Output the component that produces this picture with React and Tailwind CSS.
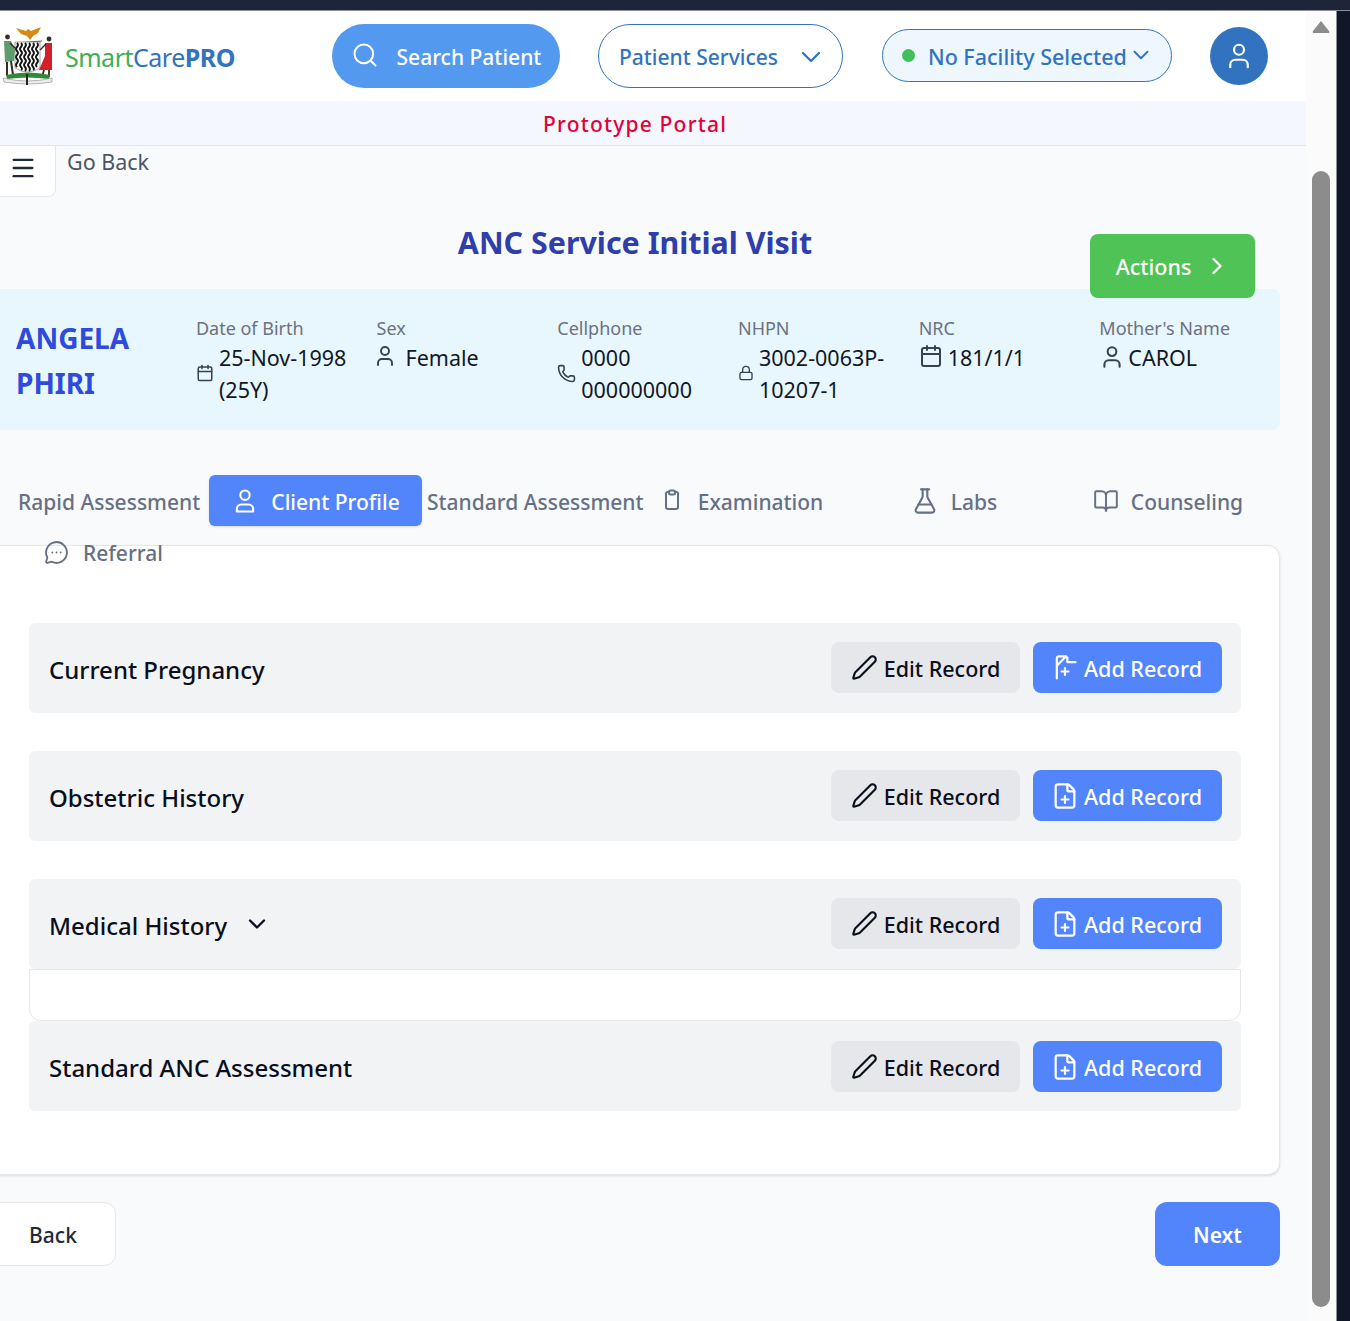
import {
  Search,
  ChevronDown,
  ChevronRight,
  User,
  Menu,
  Calendar,
  Phone,
  Lock,
  FlaskConical,
  BookOpen,
  MessageCircleMore,
  Pen,
  FilePlus,
} from "lucide-react";

/* ───── Coat of arms, drawn small ───── */
const CoatOfArms = () => (
  <svg width="52" height="60" viewBox="0 0 52 60" className="shrink-0">
    {/* eagle */}
    <path d="M14 2 L24 5 L26 3 L29 5 L39 1 L36 7 L31 10 L28 14 L25 10 L19 8 Z" fill="#d98a14" />
    <path d="M14 17 L40 15" stroke="#7a5a2a" strokeWidth="1.2" />
    {/* shield with the wavy stripes */}
    <path d="M13 16 H38 V42 Q25 50 13 42 Z" fill="#fff" stroke="#444" strokeWidth="0.5" />
    <g fill="none" stroke="#111" strokeWidth="1.8">
      <path d="M15 17 q2 2 0 4 q-2 2 0 4 q2 2 0 4 q-2 2 0 4 q2 2 0 4 q-2 2 0 4" />
      <path d="M19 17 q2 2 0 4 q-2 2 0 4 q2 2 0 4 q-2 2 0 4 q2 2 0 4 q-2 2 0 4 q2 2 0 3" />
      <path d="M23 17 q2 2 0 4 q-2 2 0 4 q2 2 0 4 q-2 2 0 4 q2 2 0 4 q-2 2 0 4 q2 2 0 4" />
      <path d="M27 17 q2 2 0 4 q-2 2 0 4 q2 2 0 4 q-2 2 0 4 q2 2 0 4 q-2 2 0 4 q2 2 0 4" />
      <path d="M31 17 q2 2 0 4 q-2 2 0 4 q2 2 0 4 q-2 2 0 4 q2 2 0 4 q-2 2 0 4 q2 2 0 3" />
      <path d="M35 17 q2 2 0 4 q-2 2 0 4 q2 2 0 4 q-2 2 0 4 q2 2 0 4 q-2 2 0 4" />
    </g>
    {/* left figure */}
    <circle cx="5.500" cy="11" r="2.400" fill="#3a2a20" />
    <path d="M2 15 L9 15 L13 24 L12 35 L3 36 Z" fill="#5f9c6c" />
    <path d="M5 36 L5 49 M9 35 L11 49" stroke="#3a2a20" strokeWidth="2" />
    <path d="M8 17 L14 23" stroke="#3a2a20" strokeWidth="1.5" />
    {/* right figure */}
    <circle cx="47" cy="13" r="2.400" fill="#3a2a20" />
    <path d="M43 17 L50 17 L50 44 L37 44 L43 30 Z" fill="#d5202a" />
    <path d="M42 44 L40 51 M47 44 L47 51" stroke="#3a2a20" strokeWidth="1.8" />
    <path d="M44 18 L38 24" stroke="#3a2a20" strokeWidth="1.5" />
    {/* ground and ribbon */}
    <path d="M4 49 Q26 44 48 49 L47 53 Q26 50 5 53 Z" fill="#2f8a35" />
    <path d="M1 52 Q26 58 50 52 L50 56 Q26 60 2 56 Z" fill="#ececec" stroke="#777" strokeWidth="0.5" />
    <path d="M25 48 L25 59" stroke="#222" strokeWidth="2" />
  </svg>
);

/* ───── The tab's user icon has a closed bottom ───── */
const ClosedUser = () => (
  <svg width="28" height="28" viewBox="0 0 24 24" fill="none" stroke="currentColor" strokeWidth="1.8" strokeLinecap="round" strokeLinejoin="round" className="-mt-1">
    <circle cx="12" cy="7" r="4" />
    <path d="M5 21v-2a4 4 0 0 1 4-4h6a4 4 0 0 1 4 4v2z" />
  </svg>
);

const NarrowClipboard = () => (
  <svg width="24" height="24" viewBox="0 0 24 24" fill="none" stroke="#667085" strokeWidth="2" strokeLinecap="round" strokeLinejoin="round" className="-mt-[6px]">
    <path d="M9 4H7.500A1.500 1.500 0 0 0 6 5.500V19a2 2 0 0 0 2 2h8a2 2 0 0 0 2-2V5.500A1.500 1.500 0 0 0 16.500 4H15" />
    <rect x="9" y="2.500" width="6" height="4" rx="1.500" />
  </svg>
);

/* first row's file icon is partly cut off in the original */
const BrokenFilePlus = () => (
  <svg width="28" height="28" viewBox="0 0 24 24" fill="none" stroke="currentColor" strokeWidth="1.9" strokeLinecap="round" strokeLinejoin="round" className="-mt-1">
    <path d="M5 21V4a2 2 0 0 1 2-2h6l-8 8" />
    <path d="M14 3v4h7" />
    <path d="M9 15h6M12 12v6" />
  </svg>
);

const infoCols = [
  { label: "Date of Birth", icon: <Calendar size={18} />, lines: ["25-Nov-1998", "(25Y)"], gap: "gap-[5px]", center: true },
  { label: "Sex", icon: <User size={24} strokeWidth={1.9} className="-ml-[4px]" />, lines: ["Female"], gap: "gap-[9px]" },
  { label: "Cellphone", icon: <Phone size={19} />, lines: ["0000", "000000000"], gap: "gap-[5px]", center: true },
  { label: "NHPN", icon: <Lock size={16} />, lines: ["3002-0063P-", "10207-1"], gap: "gap-[5px]", center: true },
  { label: "NRC", icon: <Calendar size={24} />, lines: ["181/1/1"], gap: "gap-[5px]" },
  { label: "Mother's Name", icon: <User size={26} strokeWidth={1.9} />, lines: ["CAROL"], gap: "gap-[3px]" },
];

const tabs = [
  { name: "Rapid Assessment", w: "w-[209px] pl-[18px]" },
  { name: "Client Profile", w: "w-[213px] justify-center gap-[12px] h-[51px] bg-[#5285fb] text-white rounded-md shadow-sm text-[21.700px]", icon: <ClosedUser /> },
  { name: "Standard Assessment", w: "w-[218px] pl-[5px]" },
  { name: "Examination", w: "w-[203px] justify-center gap-[14px]", icon: <NarrowClipboard /> },
  { name: "Labs", w: "w-[222px] justify-center gap-3", icon: <FlaskConical size={28} strokeWidth={1.8} className="-mt-1" /> },
  { name: "Counseling", w: "w-[206px] justify-center gap-3", icon: <BookOpen size={26} strokeWidth={1.8} className="-mt-1" /> },
  { name: "Referral", w: "w-[207px] justify-center gap-[14px]", icon: <MessageCircleMore size={25} strokeWidth={1.8} className="-mt-[3px]" /> },
];

function RecordRow({ title, chevron, addIcon, btnClass = "-mt-px" }) {
  return (
    <div className="flex items-center justify-between h-[90px] bg-[#f2f3f5] rounded-md pl-5 pr-[19px]">
      <div className="flex items-center gap-4 text-[24px] font-medium text-[#0a0f1e] mt-[3px]">
        <span>{title}</span>
        {chevron && <ChevronDown size={28} strokeWidth={2} className="-mt-1" />}
      </div>
      <div className={`flex items-center gap-[13px] ${btnClass}`}>
        <button className="flex items-center justify-center gap-[6px] w-[189px] h-[51px] pt-1 rounded-lg bg-[#e6e7ea] text-[21.500px] font-medium text-[#0a0f1e]">
          <Pen size={27} strokeWidth={1.9} className="-mt-1" />
          Edit Record
        </button>
        <button className="flex items-center justify-center gap-[5px] w-[189px] h-[51px] pt-1 pr-[2px] rounded-lg bg-[#5285fb] text-[21.500px] font-medium text-white">
          {addIcon || <FilePlus size={28} strokeWidth={1.9} className="-mt-1" />}
          Add Record
        </button>
      </div>
    </div>
  );
}

export default function App() {
  return (
    <div className="h-[1321px] w-[1350px] overflow-hidden flex flex-col bg-[#101729] font-['Noto_Sans',sans-serif]">
      {/* browser edge */}
      <div className="h-[11px] bg-[#1e2538] border-b border-[#8a8f9c] shrink-0" />

      <div className="flex flex-1 min-h-0">
        {/* ── Page ── */}
        <div className="w-[1306px] bg-[#f9fafc] flex flex-col">
          {/* ── Top nav ── */}
          <header className="h-[90px] bg-white flex items-center shrink-0">
            <div className="ml-[2px]">
              <CoatOfArms />
            </div>
            <div className="ml-[11px] mt-1 text-[25px] font-normal tracking-[-0.5px]">
              <span className="text-[#3fae54]">Smart</span>
              <span className="text-[#3273c0]">Care</span>
              <span className="text-[#3273c0] font-bold">PRO</span>
            </div>
            <button className="ml-[97px] w-[228px] h-16 pt-1 rounded-full bg-[#5499f0] text-white flex items-center justify-center gap-[18px] text-[21px] font-medium">
              <Search size={28} strokeWidth={1.75} className="-mt-[6px]" />
              Search Patient
            </button>
            <button className="ml-[38px] w-[245px] h-16 pt-1 rounded-full bg-white border border-[#3273c0] text-[#3273c0] flex items-center justify-center gap-[17px] pl-[5px] text-[21px] font-medium">
              Patient Services
              <ChevronDown size={32} strokeWidth={1.75} className="-mt-[3px]" />
            </button>
            <button className="ml-[39px] -mt-px w-[290px] h-[53px] pt-1 pl-[2px] rounded-full bg-[#eef6fe] border border-[#3273c0] text-[#3273c0] flex items-center justify-center text-[21.500px] font-medium">
              <span className="w-[13px] h-[13px] rounded-full bg-[#3fc05a] mr-[13px] -mt-[5px]" />
              No Facility Selected
              <ChevronDown size={26} strokeWidth={1.75} className="ml-[1px] -mt-[5px]" />
            </button>
            <div className="ml-[38px] w-[58px] h-[58px] rounded-full bg-[#3273c0] text-white flex items-center justify-center">
              <User size={30} strokeWidth={1.75} />
            </div>
          </header>

          {/* ── Prototype banner ── */}
          <div className="h-[45px] pt-1 bg-[#f4f8fe] border-b border-[#e3e6ec] flex items-center justify-center shrink-0">
            <span className="text-[21px] font-medium text-[#e4003a] tracking-[1.200px] -ml-[36px]">Prototype Portal</span>
          </div>

          {/* ── Sidebar toggle + go back ── */}
          <div className="flex items-start h-[51px] shrink-0">
            <div className="w-14 h-[51px] bg-white border-r border-b border-[#e5e7eb] rounded-br-lg flex items-center justify-center text-[#1f2937] pr-[10px] pb-[7px]">
              <Menu size={28} />
            </div>
            <span className="ml-[11px] text-[21.500px] text-[#4b5563] leading-[32px]">Go Back</span>
          </div>

          {/* ── Title + actions ── */}
          <div className="relative h-[92px] shrink-0 flex justify-center">
            <h1 className="text-[30.400px] font-bold text-[#2e3eab] mt-[24px] leading-[44px] -ml-[36px]">ANC Service Initial Visit</h1>
            <button className="absolute left-[1090px] top-[37px] z-10 w-[165px] h-16 pt-[2px] pl-[2px] rounded-lg bg-[#50c356] text-white flex items-center justify-center gap-3 text-[21.500px] font-medium">
              Actions
              <ChevronRight size={28} strokeWidth={2} className="-mt-[2px]" />
            </button>
          </div>

          {/* ── Patient band ── */}
          <div className="w-[1280px] h-[141px] bg-[#e8f6fe] rounded-r-lg flex pl-4 pt-[26px] shrink-0">
            <div className="w-[180px] mt-px text-[28px] leading-[45px] font-bold text-[#2f4bdc]">
              ANGELA
              <br />
              PHIRI
            </div>
            {infoCols.map((col) => (
              <div key={col.label} className="w-[180.800px] -mt-px">
                <div className="text-[18px] leading-[28px] text-[#6b7280]">{col.label}</div>
                <div className={`flex ${col.gap} ${col.center ? "items-center" : "items-start"} text-[21.500px] leading-[32px] text-[#111827]`}>
                  <span className={`shrink-0 text-[#374151] ${col.center ? "-mt-[2px]" : "mt-[2px]"}`}>{col.icon}</span>
                  <div>
                    {col.lines.map((l) => (
                      <div key={l}>{l}</div>
                    ))}
                  </div>
                </div>
              </div>
            ))}
          </div>

          {/* ── Tabs, second row spills over the card ── */}
          <div className="mt-[45px] h-[70px] relative z-10 flex flex-wrap content-start shrink-0">
            {tabs.map((t) => (
              <div key={t.name} className={`flex items-center h-[51px] pt-1 shrink-0 whitespace-nowrap text-[21px] font-medium text-[#667085] ${t.w}`}>
                {t.icon}
                <span>{t.name}</span>
              </div>
            ))}
          </div>

          {/* ── Records card ── */}
          <div className="-ml-3 w-[1292px] h-[630px] bg-white border border-[#e5e7eb] rounded-xl shadow-sm pt-[77px] pl-[40px] pr-[38px] shrink-0">
            <div className="flex flex-col">
              <RecordRow title="Current Pregnancy" addIcon={<BrokenFilePlus />} />
              <div className="h-[38px]" />
              <RecordRow title="Obstetric History" />
              <div className="h-[38px]" />
              <RecordRow title="Medical History" chevron />
              <div className="h-[52px] bg-white border border-[#e5e7eb] rounded-b-xl" />
              <RecordRow title="Standard ANC Assessment" btnClass="mt-px" />
            </div>
          </div>

          {/* ── Footer buttons ── */}
          <div className="mt-[27px] flex justify-between w-[1280px] shrink-0">
            <button className="-ml-3 w-[128px] h-16 pt-1 bg-white border border-[#e5e7eb] rounded-xl text-[21px] font-medium text-[#1f2937] pl-[2px]">Back</button>
            <button className="w-[125px] h-16 pt-1 bg-[#5285fb] rounded-xl text-[21px] font-semibold text-white">Next</button>
          </div>
        </div>

        {/* ── Scrollbar ── */}
        <div className="w-[31px] bg-[#fbfbfb] border-r border-[#8a8f9c] flex flex-col items-center shrink-0">
          <svg width="18" height="14" viewBox="0 0 18 14" className="mt-[9px]">
            <path d="M9 1 L17 11 Q18 13 16 13 H2 Q0 13 1 11 Z" fill="#8c8c8c" />
          </svg>
          <div className="mt-[137px] w-[18px] h-[1136px] rounded-full bg-[#8c8c8c]" />
        </div>
      </div>
    </div>
  );
}
